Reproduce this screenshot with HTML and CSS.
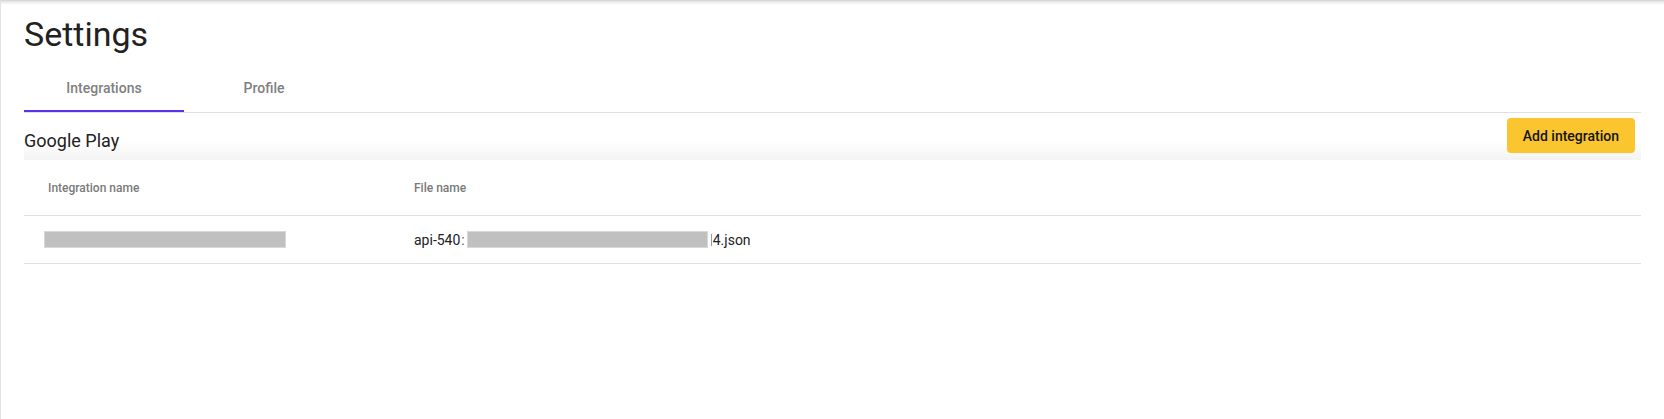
FILE: index.html
```html
<!DOCTYPE html>
<html lang="en">
<head>
<meta charset="utf-8">
<title>Settings</title>
<link rel="stylesheet" href="styles.css">
</head>
<body>
<div class="page">
  <h1 class="title">Settings</h1>
  <nav class="tabs">
    <div class="tab active">Integrations</div>
    <div class="tab">Profile</div>
  </nav>
  <section class="section">
    <header class="section-head">
      <h2 class="section-title">Google Play</h2>
      <button class="btn-add">Add integration</button>
    </header>
    <div class="table">
      <div class="row head">
        <div class="cell">Integration name</div>
        <div class="cell">File name</div>
      </div>
      <div class="row">
        <div class="cell"><span class="redact redact-name"></span></div>
        <div class="cell">api-540<span class="cut-l">:</span><span class="redact redact-file"></span><span class="cut-r"></span>4.json</div>
      </div>
    </div>
  </section>
</div>
</body>
</html>
```

FILE: styles.css
```css
html, body {
  margin: 0;
  padding: 0;
  background: #ffffff;
}

body {
  font-family: Roboto, "Liberation Sans", Arial, sans-serif;
  color: #212121;
}

.page {
  min-height: 419px;
  box-sizing: border-box;
  border-left: 1px solid #e2e2e2;
  padding: 14px 23px 0 23px;
  background: linear-gradient(to bottom, #cfcfcf 0px, #ececec 2px, #ffffff 5px) no-repeat;
}

.title {
  margin: 0;
  font-size: 34px;
  line-height: 40px;
  font-weight: 400;
  color: #212121;
}

.tabs {
  display: flex;
  margin-top: 10px;
  border-bottom: 1px solid #e0e0e0;
}

.tab {
  width: 160px;
  height: 48px;
  display: flex;
  align-items: center;
  justify-content: center;
  font-size: 14px;
  font-weight: 500;
  color: #808080;
}

.tab.active {
  box-shadow: inset 0 -2px 0 #5b30ee;
}

.section-head {
  display: flex;
  justify-content: space-between;
  align-items: flex-start;
  height: 47px;
  background: linear-gradient(to bottom, #ffffff 60%, #f3f3f3 100%);
}

.section-title {
  margin: 16px 0 0 0;
  font-size: 18px;
  line-height: 24px;
  font-weight: 400;
  color: #212121;
}

.btn-add {
  margin: 5px 6px 0 0;
  height: 35px;
  padding: 0 16px;
  border: none;
  border-radius: 4px;
  background: #fbc52f;
  font-family: Roboto, "Liberation Sans", Arial, sans-serif;
  font-size: 14px;
  font-weight: 500;
  color: #141414;
  white-space: nowrap;
}

.row {
  display: grid;
  grid-template-columns: 366px 1fr;
  height: 47px;
  border-bottom: 1px solid #e0e0e0;
}

.row.head {
  height: 55px;
}

.cell {
  display: flex;
  align-items: center;
  padding-left: 24px;
  font-size: 14px;
  color: #212121;
  white-space: pre;
}

.row.head .cell {
  font-size: 12px;
  font-weight: 500;
  color: #7a7a7a;
}

.redact {
  display: inline-block;
  height: 15px;
  background: #c0c0c0;
  border: 1px solid #d8d8d8;
  margin-top: -1px;
}

.redact-name {
  width: 240px;
  margin-left: -4px;
}

.redact-file {
  width: 239px;
  margin-left: 2px;
}

.cut-l {
  display: inline-block;
  color: #555555;
  margin-left: 1px;
}

.cut-r {
  display: inline-block;
  width: 1px;
  height: 12px;
  background: #9a9a9a;
  margin: 0 1px 0 3px;
}
```
